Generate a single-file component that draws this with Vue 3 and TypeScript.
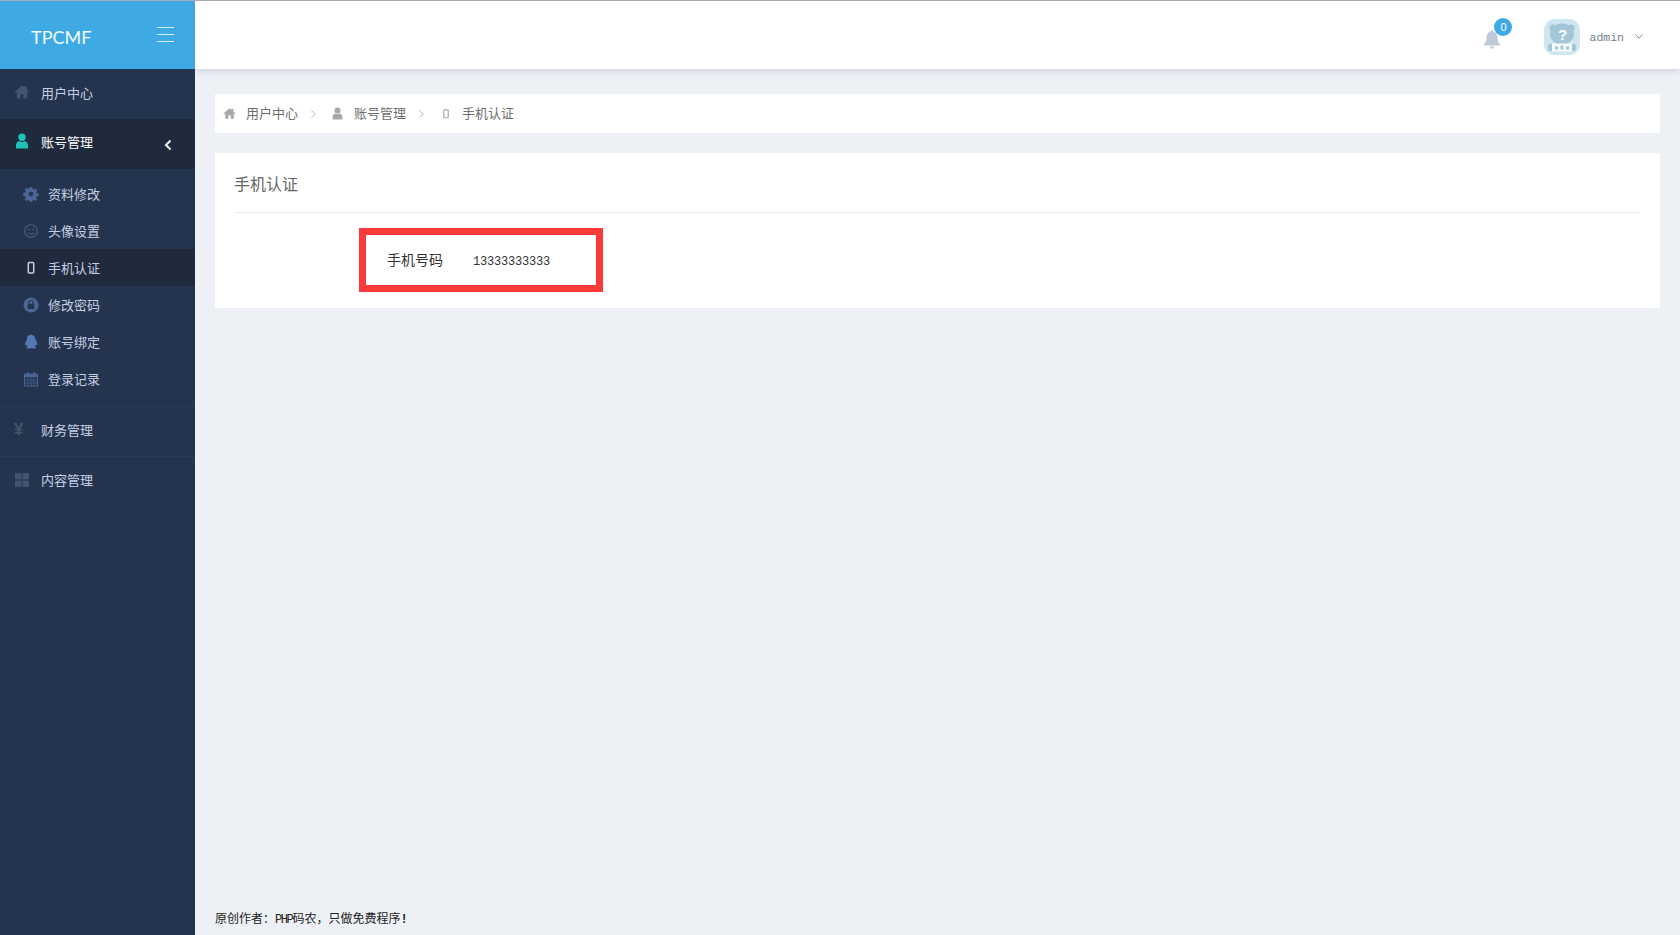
<script setup lang="ts">
interface NavItem { label: string; icon: string; active?: boolean }
const subItems: NavItem[] = [
  { label: '资料修改', icon: 'gear' },
  { label: '头像设置', icon: 'smile' },
  { label: '手机认证', icon: 'mobile', active: true },
  { label: '修改密码', icon: 'lock' },
  { label: '账号绑定', icon: 'qq' },
  { label: '登录记录', icon: 'calendar' },
]
const paths: Record<string, string> = {
  home: 'M8 1.500 .5 8l.8 1L2.800 7.700V14.500h3.800v-4.300h2.800v4.300h3.800V7.700L14.700 9l.8-1-2.800-2.500V2h-2.200v1.600z',
  user: 'M8 .5a3.700 3.700 0 1 1 0 7.400A3.700 3.700 0 0 1 8 .5zM2 15.500v-3C2 9.700 3.500 8.300 5.300 7.900 6.100 8.600 7 8.900 8 8.900s1.900-.3 2.700-1c1.800.4 3.300 1.800 3.300 4.600v3z',
  gear: 'M6.800 1h2.400l.4 2 1.300.6 1.700-1.100 1.700 1.700-1.100 1.700.6 1.300 2 .4v2.400l-2 .4-.6 1.300 1.100 1.700-1.700 1.700-1.700-1.100-1.300.6-.4 2H6.800l-.4-2-1.300-.6-1.700 1.100-1.700-1.700 1.100-1.700-.6-1.300-2-.4V6.800l2-.4.6-1.300-1.100-1.700 1.700-1.700 1.700 1.100 1.300-.6zM8 5.700a2.300 2.300 0 1 0 0 4.600 2.300 2.300 0 0 0 0-4.600z',
  qq: 'M8 .8c2.900 0 4.400 2.300 4.500 4.900.9 1.400 2.200 3.500 1.700 5.500-.3.500-.9.100-1.300-.6-.2.900-.6 1.600-1.200 2.100.9.300 1.600.8 1.400 1.400-.3.600-2.700.7-3.900.1H7.200c-1.200.6-3.600.5-3.900-.1-.2-.6.5-1.100 1.400-1.400-.6-.5-1-1.200-1.200-2.100-.4.700-1 1.100-1.300.6-.5-2 .8-4.100 1.700-5.500C3.600 3.100 5.100.8 8 .8z',
  th: 'M1 1h6.500v6.500H1zM8.500 1H15v6.500H8.500zM1 8.500h6.500V15H1zM8.500 8.500H15V15H8.500z',
}
</script>

<template>
  <div class="page">
    <aside class="sidebar">
      <div class="logo">
        <span class="logo-text">TPCMF</span>
        <span class="burger"><i></i><i></i><i></i></span>
      </div>
      <nav>
        <a class="top-row">
          <svg class="top-icon" viewBox="0 0 16 16"><path :d="paths.home" /></svg>
          <span>用户中心</span>
        </a>
        <a class="top-row open">
          <svg class="top-icon teal" viewBox="0 0 16 16"><path :d="paths.user" /></svg>
          <span>账号管理</span>
          <svg class="chev" viewBox="0 0 10 12"><path d="M7.500 1.500 3 6l4.500 4.500" /></svg>
        </a>
        <div class="sub">
          <a v-for="item in subItems" :key="item.label" class="sub-row" :class="{ current: item.active }">
            <span class="sub-icon">
              <svg v-if="item.icon === 'gear'" viewBox="0 0 16 16"><path fill-rule="evenodd" :d="paths.gear" /></svg>
              <svg v-else-if="item.icon === 'smile'" viewBox="0 0 16 16" class="dim">
                <circle cx="8" cy="8" r="6.300" fill="none" stroke="currentColor" stroke-width="1.300" />
                <circle cx="5.800" cy="6.400" r="1" /><circle cx="10.200" cy="6.400" r="1" />
                <path d="M5 9.600c1.500 2 4.500 2 6 0" fill="none" stroke="currentColor" stroke-width="1.100" />
              </svg>
              <svg v-else-if="item.icon === 'mobile'" viewBox="0 0 16 16" class="light">
                <rect x="5.300" y="2.500" width="5.400" height="10.500" rx="1" fill="none" stroke="currentColor" stroke-width="1.500" />
              </svg>
              <svg v-else-if="item.icon === 'lock'" viewBox="0 0 16 16">
                <circle cx="8" cy="8" r="7.500" />
                <rect x="4.700" y="7" width="6.600" height="5" rx=".6" fill="#25344e" />
                <path d="M6 7V5.500a2 2 0 0 1 4 0V7" fill="none" stroke="#25344e" stroke-width="1.200" />
              </svg>
              <svg v-else-if="item.icon === 'qq'" viewBox="0 0 16 16" class="bright"><path :d="paths.qq" /></svg>
              <svg v-else viewBox="0 0 16 16" class="cal">
                <path d="M1.500 3h13v12h-13z" fill="none" stroke="currentColor" stroke-width="1" />
                <path d="M1.500 3h13v3h-13zM4 1h1.500v3H4zM10.500 1H12v3h-1.500z" />
                <path d="M1.500 9h13M1.500 12h13M5 6v9M8 6v9M11 6v9" fill="none" stroke="currentColor" stroke-width=".7" />
              </svg>
            </span>
            <span>{{ item.label }}</span>
          </a>
        </div>
        <a class="top-row ruled">
          <span class="yen">¥</span>
          <span>财务管理</span>
        </a>
        <a class="top-row ruled">
          <svg class="top-icon" viewBox="0 0 16 16"><path :d="paths.th" /></svg>
          <span>内容管理</span>
        </a>
      </nav>
    </aside>

    <div class="main">
      <header class="topbar">
        <span class="bell">
          <svg viewBox="0 0 20 22"><path d="M10 2.500c.9 0 1.400.5 1.500 1.200 2.600.7 4 2.900 4 5.600 0 3.300.7 5.200 2.500 6.900v1.300H2v-1.300c1.800-1.700 2.500-3.600 2.500-6.900 0-2.700 1.400-4.900 4-5.600.1-.7.600-1.200 1.500-1.200zM7.800 18.500h4.400a2.200 2.200 0 0 1-4.400 0z" /></svg>
          <b class="badge">0</b>
        </span>
        <span class="avatar">
          <svg viewBox="0 0 36 36">
            <rect width="36" height="36" rx="11" fill="#cfe6f0" />
            <circle cx="9" cy="9" r="3.500" fill="#a3c6d8" /><circle cx="27" cy="9" r="3.500" fill="#a3c6d8" />
            <ellipse cx="18" cy="15" rx="12" ry="10.500" fill="#a3c6d8" />
            <rect x="4" y="25" width="28" height="7" rx="2" fill="#a3c6d8" />
            <rect x="8" y="24.500" width="20" height="8" fill="#f4f9fb" />
            <path d="M11 27.500h3v3h-3zM16.500 26.500h3v4h-3zM22 27.500h3v3h-3z" fill="#a3c6d8" />
          </svg>
          <em>?</em>
        </span>
        <span class="username">admin</span>
        <svg class="caret" viewBox="0 0 12 8"><path d="M1.500 1.500 6 6l4.500-4.500" /></svg>
      </header>

      <div class="content">
        <div class="crumbs">
          <svg viewBox="0 0 16 16"><path :d="paths.home" /></svg>
          <span>用户中心</span>
          <svg class="sep" viewBox="0 0 8 12"><path d="M1.500 1.500 6 6l-4.500 4.500" /></svg>
          <svg viewBox="0 0 16 16"><path :d="paths.user" /></svg>
          <span>账号管理</span>
          <svg class="sep" viewBox="0 0 8 12"><path d="M1.500 1.500 6 6l-4.500 4.500" /></svg>
          <svg class="phone" viewBox="0 0 16 16"><rect x="5" y="2.500" width="6" height="10.500" rx="1" /></svg>
          <span>手机认证</span>
        </div>

        <section class="card">
          <h2>手机认证</h2>
          <div class="field">
            <label>手机号码</label>
            <span>13333333333</span>
          </div>
        </section>

        <footer class="credit">原创作者：<span class="latin">PHP</span>码农，只做免费程序<b class="latin">!</b></footer>
      </div>
    </div>
  </div>
</template>

<style>
html, body { margin: 0; padding: 0; }
</style>

<style scoped>
.page {
  display: flex;
  height: 935px;
  overflow: hidden;
  background: #edf0f5;
  font-family: "Noto Sans CJK SC", "Liberation Sans", sans-serif;
}
.sidebar {
  width: 195px;
  flex: none;
  background: #25344e;
  color: #c5d0e4;
  font-size: 13px;
}
.logo {
  height: 68px;
  border-top: 1px solid #9fb0bc;
  background: #3fa9e3;
  display: flex;
  align-items: center;
  padding-left: 31px;
}
.logo-text {
  font-family: Lato, sans-serif;
  font-size: 18px;
  color: #f2fbff;
  margin-top: 4px;
  width: 126px;
  flex: none;
}
.burger {
  margin-top: -2px;
  display: flex;
  flex-direction: column;
  gap: 6px;
}
.burger i {
  display: block;
  width: 17px;
  height: 1px;
  background: #d5eefb;
}
.top-row {
  height: 50px;
  display: flex;
  align-items: center;
  padding-left: 14px;
  box-sizing: border-box;
}
.top-row.open {
  background: #1f2a3d;
  color: #fff;
  position: relative;
}
.top-row.ruled { border-top: 1px solid #2c3c58; }
.top-row > span:not(.yen) { margin: -4px 0 0 11px; }
.top-row.open > span { margin-top: -6px; margin-left: 10px; }
.top-icon {
  width: 16px;
  height: 16px;
  flex: none;
  fill: #45546e;
  margin-top: -4px;
}
.top-icon.teal { fill: #1cc4b8; margin-top: -7px; margin-right: 1px; }
.chev {
  position: absolute;
  left: 163px;
  top: 20px;
  width: 10px;
  height: 12px;
  fill: none;
  stroke: #fff;
  stroke-width: 2;
}
.yen {
  width: 16px;
  color: #45546e;
  font: 700 17px/1 "Liberation Sans", sans-serif;
  margin-top: -4px;
}
.sub { padding: 6px 0 9px; }
.sub-row {
  height: 37px;
  display: flex;
  align-items: center;
  padding-left: 23px;
  gap: 9px;
}
.sub-row.current { background: #1f2a3d; }
.sub-icon {
  width: 16px;
  height: 16px;
  display: flex;
  color: #4b6595;
}
.sub-icon svg { width: 16px; height: 16px; fill: currentColor; }
.sub-icon .dim { color: #45597e; }
.sub-icon .light { color: #c5d0e4; }
.sub-icon .bright { color: #5679b5; }
.sub-icon .cal { color: #4b6595; }
.main {
  flex: 1;
  min-width: 0;
  display: flex;
  flex-direction: column;
}
.topbar {
  height: 68px;
  flex: none;
  border-top: 1px solid #a9a9a9;
  background: #fff;
  box-shadow: 0 2px 6px rgba(120, 130, 150, .25);
  display: flex;
  align-items: center;
  justify-content: flex-end;
  padding-right: 36px;
  position: relative;
  z-index: 1;
}
.bell {
  position: relative;
  width: 20px;
  height: 22px;
  margin: 8px 42px 0 0;
}
.bell svg { width: 20px; height: 22px; fill: #bfcadb; display: block; }
.badge {
  position: absolute;
  left: 12px;
  top: -10px;
  width: 18px;
  height: 18px;
  border-radius: 50%;
  background: #3fa9e3;
  color: #fff;
  font: 400 11px/18px "Liberation Sans", sans-serif;
  text-align: center;
}
.avatar {
  position: relative;
  width: 36px;
  height: 36px;
  margin: 4px 9px 0 0;
}
.avatar svg { width: 36px; height: 36px; display: block; }
.avatar em {
  position: absolute;
  left: 0;
  right: 0;
  top: 8px;
  text-align: center;
  font: 700 15px/1 "Liberation Sans", sans-serif;
  color: #fff;
}
.username {
  font: 11.5px "Liberation Mono", monospace;
  color: #6f8090;
  margin: 4px 10px 0 0;
}
.caret {
  width: 10px;
  height: 7px;
  fill: none;
  stroke: #7d8a98;
  stroke-width: 1.200;
  margin-top: 2px;
}
.content {
  flex: 1;
  display: flex;
  flex-direction: column;
  padding: 25px 20px 0;
  min-height: 0;
}
.crumbs {
  height: 39px;
  background: #fff;
  display: flex;
  align-items: center;
  padding-left: 8px;
  color: #6f6f6f;
  font-size: 13px;
  flex: none;
}
.crumbs svg { width: 13px; height: 13px; fill: #a8a8a8; }
.crumbs span { margin: -3px 0 0 10px; }
.crumbs .sep {
  width: 7px;
  height: 10px;
  fill: none;
  stroke: #a8a8a8;
  stroke-width: 1;
  margin: 0 14px 0 12px;
}
.crumbs .phone {
  width: 12px;
  height: 12px;
  fill: none;
  stroke: #a8a8a8;
  stroke-width: 1.500;
  margin-left: 1px;
}
.crumbs .phone + span { margin-left: 10px; }
.card {
  margin-top: 20px;
  height: 155px;
  flex: none;
  box-sizing: border-box;
  background: #fff;
  padding: 0 20px;
}
.card h2 {
  margin: 0;
  height: 59px;
  line-height: 60px;
  border-bottom: 1px solid #ebebeb;
  font-size: 16px;
  font-weight: 400;
  color: #666;
  text-indent: -1px;
}
.field {
  width: 244px;
  height: 64px;
  box-sizing: border-box;
  margin: 15px 0 0 124px;
  border: 7px solid #fb3a3a;
  display: flex;
  align-items: center;
  padding-left: 21px;
  gap: 30px;
  color: #333;
}
.field label { font-size: 14px; margin-top: -2px; }
.field span { font: 12px "Liberation Mono", monospace; letter-spacing: -.2px; margin-top: 3px; }
.credit {
  margin-top: auto;
  height: 26px;
  font-size: 12px;
  color: #222;
}
.credit .latin { font: 400 12px "Liberation Mono", monospace; letter-spacing: -1.4px; }
.credit b.latin { font-weight: 700; letter-spacing: 0; }
</style>
